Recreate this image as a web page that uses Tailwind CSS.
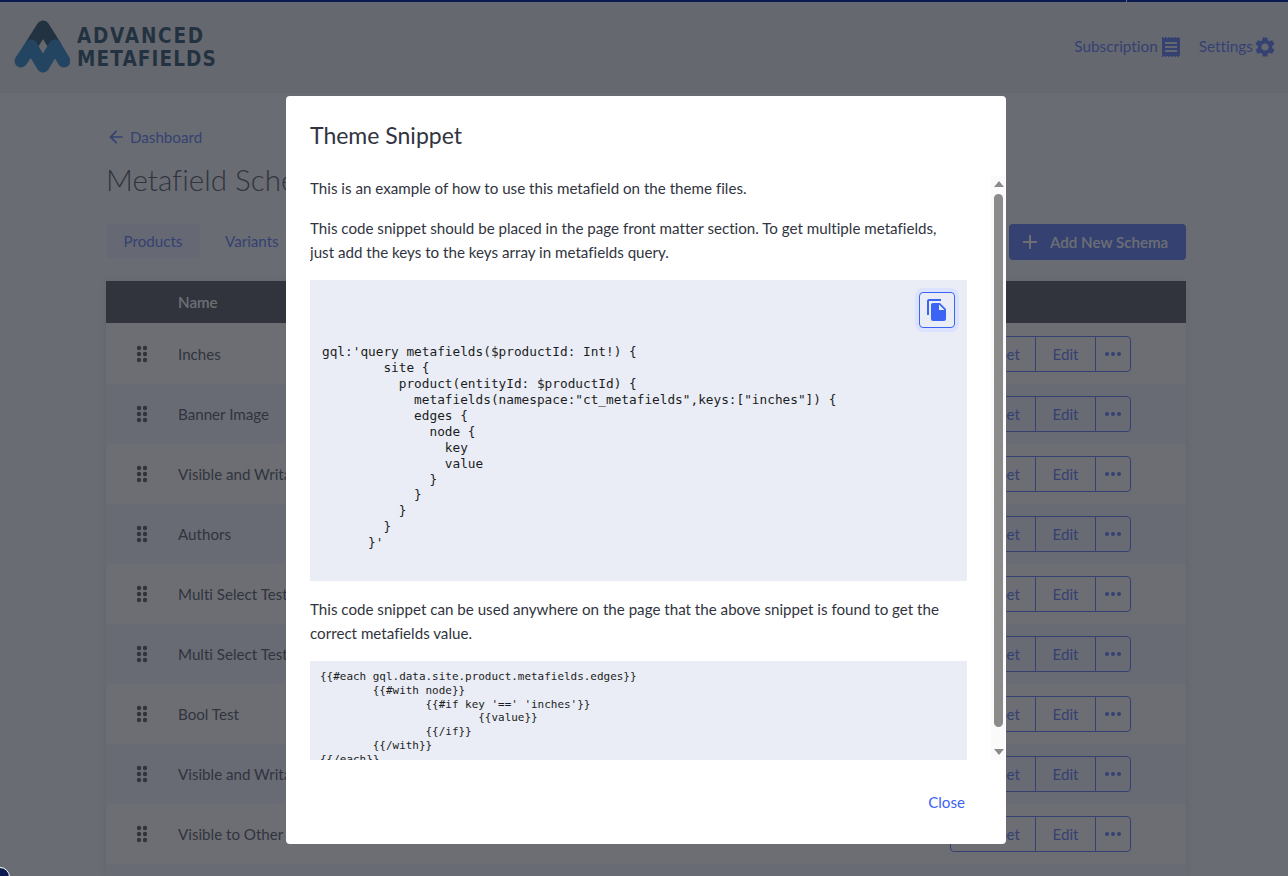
<!DOCTYPE html>
<html lang="en">
<head>
  <meta charset="UTF-8">
  <title>Metafield Schemas - Advanced Metafields</title>
  <script src="https://cdn.jsdelivr.net/npm/@tailwindcss/browser@4"></script>
</head>
<body class="h-[876px] overflow-hidden bg-[#f6f7fa] font-['Lato','Noto_Sans',sans-serif] text-[15.15px] text-[#313440] [font-variant-ligatures:none]">
  <div class="h-[2px]"></div>

  <!-- Header -->
  <header class="flex h-[91px] items-center justify-between bg-[#e8ebf1] pl-[14px] pr-[11px]">
    <a href="#" class="flex items-center gap-[7px] pb-[1px]">
      <svg width="56" height="54" viewBox="0 0 56 54" fill="none" stroke-width="13" stroke-linecap="round" stroke-linejoin="round">
        <polyline points="17,26 29,7 41,26" stroke="#00304f"/>
        <polyline points="7,41 17,26 29,46 41,26 50,41" stroke="#0070c0"/>
      </svg>
      <span class="flex origin-left scale-x-[0.86] flex-col whitespace-nowrap font-['DejaVu_Sans',sans-serif] text-[21.5px] leading-[23px] font-bold text-[#00304f]">
        <span class="tracking-[2px]">ADVANCED</span>
        <span class="tracking-[1.25px]">METAFIELDS</span>
      </span>
    </a>
    <nav class="flex items-center gap-[16px] pb-[2px] text-[15.35px] text-[#3c64f4]">
      <a href="#" class="flex items-center">Subscription
        <svg class="ml-[1px]" width="24" height="24" viewBox="0 0 24 24" fill="currentColor">
          <path fill-rule="evenodd" d="M3 3h18v18H3z M6 7v2h12V7z M6 11v2h12v-2z M6 15v2h12v-2z"/>
          <path d="M3 2.500h18M3 21.500h18" stroke="currentColor" stroke-dasharray="1.500 1.500"/>
        </svg>
      </a>
      <a href="#" class="flex items-center">Settings
        <svg width="24" height="24" viewBox="0 0 24 24" fill="currentColor"><path d="M19.140 12.940c.04-.3.060-.61.060-.94 0-.32-.02-.64-.07-.94l2.030-1.580a.49.49 0 0 0 .12-.61l-1.920-3.320a.488.488 0 0 0-.59-.22l-2.390.96c-.5-.38-1.030-.7-1.620-.94l-.36-2.540a.484.484 0 0 0-.48-.41h-3.840c-.24 0-.43.170-.47.41l-.36 2.540c-.59.240-1.130.570-1.620.94l-2.390-.96c-.22-.08-.47 0-.59.220L2.740 8.870c-.12.210-.08.470.12.610l2.030 1.580c-.05.300-.09.630-.09.940s.02.640.07.940l-2.030 1.580a.49.49 0 0 0-.12.610l1.920 3.320c.12.220.37.290.59.220l2.390-.96c.5.380 1.030.7 1.620.94l.36 2.540c.05.240.24.410.48.410h3.840c.24 0 .44-.17.470-.41l.36-2.540c.59-.24 1.130-.56 1.620-.94l2.390.96c.22.080.47 0 .59-.22l1.920-3.320c.12-.22.07-.47-.12-.61l-2.010-1.580zM12 15.600c-1.980 0-3.600-1.620-3.600-3.600s1.620-3.600 3.600-3.600 3.600 1.620 3.600 3.600-1.620 3.600-3.600 3.600z"/></svg>
      </a>
    </nav>
  </header>

  <!-- Page behind the modal -->
  <main class="pl-[106px] pr-[102px]">
    <a href="#" class="mt-[32px] flex h-[24px] items-center gap-[4px] text-[#3c64f4]">
      <svg width="20" height="20" viewBox="0 0 24 24" fill="currentColor"><path d="M20 11H7.830l5.590-5.590L12 4l-8 8 8 8 1.410-1.410L7.830 13H20z"/></svg>
      Dashboard
    </a>
    <h1 class="mt-[11px] whitespace-nowrap text-[29.6px] leading-[40px] font-light">Metafield Schemas</h1>

    <div class="mt-[24px] flex h-[36px] items-start justify-between">
      <div class="flex items-center gap-[8px] text-[#3c64f4]">
        <a href="#" class="flex h-[34px] w-[94px] items-center justify-center rounded bg-[#e8ebfb]">Products</a>
        <a href="#" class="flex h-[34px] items-center px-[17px]">Variants</a>
      </div>
      <a href="#" class="flex h-[36px] w-[177px] items-center rounded bg-[#3c64f4] pl-[9px] font-semibold text-white">
        <svg class="mr-[8px]" width="24" height="24" viewBox="0 0 24 24" fill="currentColor"><path d="M19 13h-6v6h-2v-6H5v-2h6V5h2v6h6z"/></svg>
        Add New Schema
      </a>
    </div>

    <div class="mt-[21px] shadow-[0_0_8px_rgba(49,52,64,0.12)]">
      <div class="flex h-[42px] items-center bg-[#313440] pl-[72px] font-semibold text-white">Name</div>
      <div id="rows" class="bg-white pt-[1px]"></div>
      <div class="h-[12px] bg-[#f0f0fd]"></div>
    </div>
  </main>

  <!-- Overlay -->
  <div class="fixed inset-0 bg-[rgba(49,52,60,0.715)]"></div>

  <!-- Things that sit above the overlay -->
  <div class="fixed inset-x-0 top-0 h-[2px] bg-[#0a1a50]">
    <div class="absolute left-[1126px] top-0 h-[2px] w-[1px] bg-[#6c6f78]"></div>
  </div>
  <div class="fixed bottom-[-11px] left-[-10px] h-[20px] w-[20px] rounded-full border border-white bg-[#0a1a50]"></div>

  <!-- Modal -->
  <div class="fixed left-[286px] top-[96px] h-[748px] w-[720px] rounded bg-white">
    <h2 class="pl-[24px] pt-[23px] text-[23px] leading-[32px]">Theme Snippet</h2>

    <div class="absolute left-[24px] top-[80px] h-[584px] w-[657px] overflow-hidden leading-[24px]">
      <p>This is an example of how to use this metafield on the theme files.</p>
      <p class="mt-[16px]">This code snippet should be placed in the page front matter section. To get multiple metafields,<br>just add the keys to the keys array in metafields query.</p>

      <div class="relative mt-[16px] h-[301px] bg-[#eaedf5]">
        <button class="absolute right-[12px] top-[12px] flex h-[36px] w-[36px] items-center justify-center rounded border border-[#3c64f4] text-[#3c64f4] ring-4 ring-[#dbe3fe]">
          <svg width="24" height="24" viewBox="0 0 24 24" fill="currentColor"><path d="M16 1H4c-1.100 0-2 .9-2 2v14h2V3h12V1zm-1 4l6 6v10c0 1.100-.9 2-2 2H7.990C6.890 23 6 22.100 6 21l.010-14c0-1.100.89-2 1.990-2h7zm-1 7h5.500L14 6.500V12z"/></svg>
        </button>
        <pre class="pl-[12px] pt-[64px] font-['DejaVu_Sans_Mono',monospace] text-[12.75px] leading-[15.93px] text-[#1b1d24]">gql:'query metafields($productId: Int!) {
        site {
          product(entityId: $productId) {
            metafields(namespace:"ct_metafields",keys:["inches"]) {
            edges {
              node {
                key
                value
              }
            }
          }
        }
      }'</pre>
      </div>

      <p class="mt-[16px]">This code snippet can be used anywhere on the page that the above snippet is found to get the<br>correct metafields value.</p>

      <div class="mt-[16px] h-[120px] bg-[#eaedf5]">
        <pre class="pl-[10px] pt-[9px] font-['DejaVu_Sans_Mono',monospace] text-[10.96px] leading-[13.75px] text-[#1b1d24]">{{#each gql.data.site.product.metafields.edges}}
        {{#with node}}
                {{#if key '==' 'inches'}}
                        {{value}}
                {{/if}}
        {{/with}}
{{/each}}</pre>
      </div>
    </div>

    <!-- Scrollbar -->
    <div class="absolute left-[705px] top-[80px] h-[584px] w-[14px] bg-[#fafafa]">
      <div class="absolute left-[3px] top-[5px] h-0 w-0 border-x-[5px] border-b-[6px] border-x-transparent border-b-[#8b8b8b]"></div>
      <div class="absolute left-[3px] top-[18px] h-[533px] w-[9px] rounded-full bg-[#8b8b8b]"></div>
      <div class="absolute bottom-[5px] left-[3px] h-0 w-0 border-x-[5px] border-t-[6px] border-x-transparent border-t-[#8b8b8b]"></div>
    </div>

    <a href="#" class="absolute right-[41px] top-[694px] leading-[24px] text-[#3c64f4]">Close</a>
  </div>

  <script>
    const names = ['Inches', 'Banner Image', 'Visible and Writable', 'Authors', 'Multi Select Test', 'Multi Select Test 2', 'Bool Test', 'Visible and Writable', 'Visible to Other Apps'];
    document.getElementById('rows').innerHTML = names.map((name, i) => `
      <div class="flex h-[60px] items-center ${i % 2 ? 'bg-[#f0f0fd]' : 'bg-white'}">
        <div class="flex w-[72px] justify-center">
          <svg width="12" height="18" viewBox="0 0 12 18" fill="#313440"><circle cx="3" cy="3" r="2.200"/><circle cx="9" cy="3" r="2.200"/><circle cx="3" cy="9" r="2.200"/><circle cx="9" cy="9" r="2.200"/><circle cx="3" cy="15" r="2.200"/><circle cx="9" cy="15" r="2.200"/></svg>
        </div>
        <span>${name}</span>
        <div class="ml-auto mr-[55px] flex h-[36px] w-[181px] rounded border border-[#3c64f4] text-[#3c64f4]">
          <span class="flex w-[85px] items-center justify-end border-r border-[#3c64f4] pr-[15px]">Snippet</span>
          <span class="flex w-[60px] items-center justify-center border-r border-[#3c64f4]">Edit</span>
          <span class="flex flex-1 items-center justify-center">
            <svg width="16" height="4" viewBox="0 0 16 4" fill="currentColor"><circle cx="2" cy="2" r="2"/><circle cx="8" cy="2" r="2"/><circle cx="14" cy="2" r="2"/></svg>
          </span>
        </div>
      </div>
    `).join('');
  </script>
</body>
</html>
